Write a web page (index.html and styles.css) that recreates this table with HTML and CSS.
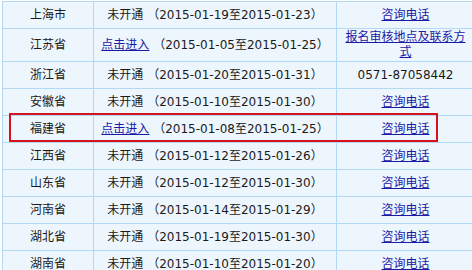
FILE: index.html
```html
<!DOCTYPE html>
<html lang="zh">
<head>
<meta charset="utf-8">
<link rel="stylesheet" href="styles.css">
</head>
<body>
<div class="wrap">
<table class="exam">
<colgroup><col class="c1"><col class="c2"><col class="c3"></colgroup>
<tbody>
<tr><td>上海市</td><td>未开通 （2015-01-19至2015-01-23）</td><td><a href="#">咨询电话</a></td></tr>
<tr class="tall"><td>江苏省</td><td><a href="#">点击进入</a> （2015-01-05至2015-01-25）</td><td><a href="#">报名审核地点及联系方式</a></td></tr>
<tr><td>浙江省</td><td>未开通 （2015-01-20至2015-01-31）</td><td>0571-87058442</td></tr>
<tr><td>安徽省</td><td>未开通 （2015-01-10至2015-01-30）</td><td><a href="#">咨询电话</a></td></tr>
<tr><td>福建省</td><td><a href="#">点击进入</a> （2015-01-08至2015-01-25）</td><td><a href="#">咨询电话</a></td></tr>
<tr><td>江西省</td><td>未开通 （2015-01-12至2015-01-26）</td><td><a href="#">咨询电话</a></td></tr>
<tr><td>山东省</td><td>未开通 （2015-01-12至2015-01-30）</td><td><a href="#">咨询电话</a></td></tr>
<tr><td>河南省</td><td>未开通 （2015-01-14至2015-01-29）</td><td><a href="#">咨询电话</a></td></tr>
<tr><td>湖北省</td><td>未开通 （2015-01-19至2015-01-30）</td><td><a href="#">咨询电话</a></td></tr>
<tr><td>湖南省</td><td>未开通 （2015-01-10至2015-01-20）</td><td><a href="#">咨询电话</a></td></tr>
</tbody>
</table>
<div class="mark"></div>
</div>
</body>
</html>
```
FILE: styles.css
```css
html, body {
  margin: 0;
  padding: 0;
  overflow: hidden;
  background: #ffffff;
}
.wrap {
  position: relative;
  padding: 1px 0 0 2px;
}
.exam {
  border-collapse: collapse;
  table-layout: fixed;
  width: 472px;
  font-family: "DejaVu Sans", "Noto Sans CJK SC", sans-serif;
  font-size: 12px;
  color: #1a1a1a;
  border-left: 1px solid #b3d8f4;
}
.c1 { width: 91px; }
.c2 { width: 243px; }
.c3 { width: 138px; }
.exam td {
  height: 27px;
  padding: 0 4px;
  box-sizing: border-box;
  border: 1px solid #b3d8f4;
  background: #eef6fd;
  text-align: center;
  vertical-align: middle;
  line-height: 15px;
  white-space: normal;
}
.exam tr.first td {
  height: 28px;
}
.exam tr.tall td {
  height: 33px;
}
.exam a {
  color: #1a1aa6;
  text-decoration: underline;
}
.mark {
  position: absolute;
  left: 9px;
  top: 113px;
  width: 429px;
  height: 29px;
  border: 2px solid #d8121b;
  box-sizing: border-box;
}
```
